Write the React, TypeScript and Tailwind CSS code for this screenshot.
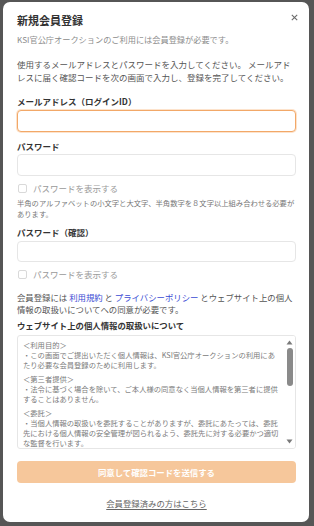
import React from "react";

const font = { fontFamily: '"Noto Sans CJK JP", "Noto Sans", sans-serif' };

function Checkbox({ label }: { label: string }) {
  return (
    <div className="flex items-center h-[12px] mt-[6px]">
      <div className="w-[9px] h-[9px] ml-[1px] rounded-[2px] border border-[#d9d9d9] bg-white" />
      <span className="ml-[6px] text-[8.5px] leading-[12px] text-[#9a9a9a] whitespace-nowrap">{label}</span>
    </div>
  );
}

export default function App() {
  return (
    <div style={font} className="w-[314px] h-[526px] bg-[#565656] pt-[2px] pl-[3px] overflow-hidden">
      <div className="relative w-[306px] h-[520px] bg-white rounded-[7px] pl-[14px] pr-[13px] pt-[10px] flex flex-col">
        <svg className="absolute right-[11px] top-[12px]" width="7" height="7" viewBox="0 0 7 7">
          <path d="M0.8 0.8 L6.2 6.2 M6.2 0.8 L0.8 6.2" stroke="#6b6b6b" strokeWidth="1.1" />
        </svg>
        <div className="text-[11px] leading-[16px] font-bold text-[#333]">新規会員登録</div>
        <div className="mt-[5px] text-[8.2px] leading-[12px] text-[#8c8c8c] whitespace-nowrap">
          KSI官公庁オークションのご利用には会員登録が必要です。
        </div>
        <div className="mt-[13px] text-[8.5px] leading-[13px] text-[#555] whitespace-nowrap">
          使用するメールアドレスとパスワードを入力してください。 メールアド
          <br />
          レスに届く確認コードを次の画面で入力し、登録を完了してください。
        </div>

        <div className="mt-[11px] text-[8.5px] leading-[12px] font-bold text-[#333]">メールアドレス（ログインID）</div>
        <div className="mt-[3px] h-[22px] rounded-[4px] border-[1.5px] border-[#f2a868] shadow-[0_0_0_1px_#fde3cc] bg-white" />

        <div className="mt-[8px] text-[8.5px] leading-[12px] font-bold text-[#333]">パスワード</div>
        <div className="mt-[2px] h-[22px] rounded-[4px] border border-[#e6e6e6] bg-white" />
        <Checkbox label="パスワードを表示する" />
        <div className="mt-[4px] text-[7.3px] leading-[11px] text-[#777] whitespace-nowrap">
          半角のアルファベットの小文字と大文字、半角数字を８文字以上組み合わせる必要が
          <br />
          あります。
        </div>

        <div className="mt-[6px] text-[8.5px] leading-[12px] font-bold text-[#333]">パスワード（確認）</div>
        <div className="mt-[3px] h-[21px] rounded-[4px] border border-[#e6e6e6] bg-white" />
        <Checkbox label="パスワードを表示する" />

        <div className="mt-[11px] text-[8.4px] leading-[12px] text-[#555] whitespace-nowrap">
          会員登録には <span className="text-[#3a4bd4]">利用規約</span> と{" "}
          <span className="text-[#3a4bd4]">プライバシーポリシー</span> とウェブサイト上の個人
          <br />
          情報の取扱いについてへの同意が必要です。
        </div>
        <div className="mt-[4px] text-[8.4px] leading-[12px] font-bold text-[#333]">
          ウェブサイト上の個人情報の取扱いについて
        </div>

        <div className="relative mt-[4px] h-[114px] rounded-[3px] border border-[#e6e6e6] overflow-hidden pl-[5px] pt-[4px] text-[7.3px] leading-[10px] text-[#7a7a7a] whitespace-nowrap">
          <div>＜利用目的＞</div>
          <div>
            ・この画面でご提出いただく個人情報は、KSI官公庁オークションの利用にあ
            <br />
            たり必要な会員登録のために利用します。
          </div>
          <div className="mt-[4px]">＜第三者提供＞</div>
          <div>
            ・法令に基づく場合を除いて、ご本人様の同意なく当個人情報を第三者に提供
            <br />
            することはありません。
          </div>
          <div className="mt-[4px]">＜委託＞</div>
          <div>
            ・当個人情報の取扱いを委託することがありますが、委託にあたっては、委託
            <br />
            先における個人情報の安全管理が図られるよう、委託先に対する必要かつ適切
            <br />
            な監督を行います。
          </div>

          <div className="absolute right-0 top-0 bottom-0 w-[11px] bg-white flex flex-col items-center">
            <svg className="mt-[4px]" width="7" height="5" viewBox="0 0 7 5">
              <path d="M3.5 0.5 L6.5 4.5 L0.5 4.5 Z" fill="#7a7a7a" />
            </svg>
            <div className="mt-[3px] w-[6px] h-[38px] rounded-[3px] bg-[#8a8a8a]" />
            <div className="flex-1" />
            <svg className="mb-[4px]" width="7" height="5" viewBox="0 0 7 5">
              <path d="M0.5 0.5 L6.5 0.5 L3.5 4.5 Z" fill="#7a7a7a" />
            </svg>
          </div>
        </div>

        <div className="mt-[12px] h-[22px] rounded-[4px] bg-[#f6c79b] flex items-center justify-center text-[8.4px] font-bold text-white">
          同意して確認コードを送信する
        </div>

        <div className="mt-[14px] text-center text-[8.4px] leading-[12px] text-[#666] underline underline-offset-[2px]">
          会員登録済みの方はこちら
        </div>
      </div>
    </div>
  );
}
